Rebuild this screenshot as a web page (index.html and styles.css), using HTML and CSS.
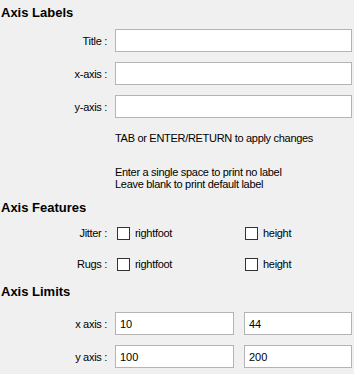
FILE: index.html
```html
<!DOCTYPE html>
<html>
<head>
    <title>Axis options</title>
    <link rel="stylesheet" href="styles.css">
</head>
<body>
    <div class="panel">
        <h2 class="heading">Axis Labels</h2>
        <div class="row">
            <label class="label">Title :</label>
            <input class="field" type="text">
        </div>
        <div class="row">
            <label class="label">x-axis :</label>
            <input class="field" type="text">
        </div>
        <div class="row">
            <label class="label">y-axis :</label>
            <input class="field" type="text">
        </div>
        <div class="note">TAB or ENTER/RETURN to apply changes</div>
        <div class="note note-gap">Enter a single space to print no label<br>Leave blank to print default label</div>

        <h2 class="heading heading-features">Axis Features</h2>
        <div class="row check-row">
            <label class="label">Jitter :</label>
            <div class="checks">
                <span class="check"><span class="box"></span>rightfoot</span>
                <span class="check"><span class="box"></span>height</span>
            </div>
        </div>
        <div class="row check-row">
            <label class="label">Rugs :</label>
            <div class="checks">
                <span class="check"><span class="box"></span>rightfoot</span>
                <span class="check"><span class="box"></span>height</span>
            </div>
        </div>

        <h2 class="heading heading-limits">Axis Limits</h2>
        <div class="row">
            <label class="label">x axis :</label>
            <div class="pair">
                <input class="field field-min" type="text" value="10">
                <input class="field" type="text" value="44">
            </div>
        </div>
        <div class="row">
            <label class="label">y axis :</label>
            <div class="pair">
                <input class="field field-min" type="text" value="100">
                <input class="field" type="text" value="200">
            </div>
        </div>
    </div>
</body>
</html>
```

FILE: styles.css
```css
body {
    margin: 0;
    background: #f0f0f0;
    font-family: "Liberation Sans", Arial, sans-serif;
    font-size: 11px;
    letter-spacing: -0.3px;
    color: #000;
}
.panel {
    padding: 5px 2px 0 1px;
}
.heading {
    margin: 0 0 8px 0;
    font-size: 13px;
    font-weight: bold;
    line-height: 16px;
    letter-spacing: 0;
}
.heading-features {
    margin-bottom: 6px;
}
.heading-limits {
    margin-top: 9px;
    margin-bottom: 12px;
}
.row {
    display: flex;
    align-items: center;
    margin-bottom: 10px;
}
.label {
    flex-shrink: 0;
    width: 106px;
    padding-right: 8px;
    text-align: right;
}
.field {
    flex: 1 1 0;
    width: 0;
    min-width: 0;
    height: 23px;
    box-sizing: border-box;
    margin: 0;
    padding: 0 4px;
    border: 1px solid #b4b4b4;
    background: #fff;
    font-family: inherit;
    font-size: 11px;
    color: #000;
}
.note {
    margin-left: 114px;
    margin-top: 14px;
    line-height: 13px;
}
.note-gap {
    margin-top: 21px;
    margin-bottom: 10px;
    line-height: 12px;
}
.check-row {
    height: 22px;
    margin-bottom: 9px;
}
.checks {
    flex: 1;
    display: grid;
    grid-template-columns: 128px 1fr;
    margin-left: 2px;
}
.check {
    display: flex;
    align-items: center;
}
.box {
    width: 11px;
    height: 11px;
    border: 1px solid #333;
    background: #fff;
    margin-right: 5px;
}
.pair {
    flex: 1 1 0;
    min-width: 0;
    display: flex;
    gap: 10px;
}
.field-min {
    flex: 0 0 119px;
}
```
